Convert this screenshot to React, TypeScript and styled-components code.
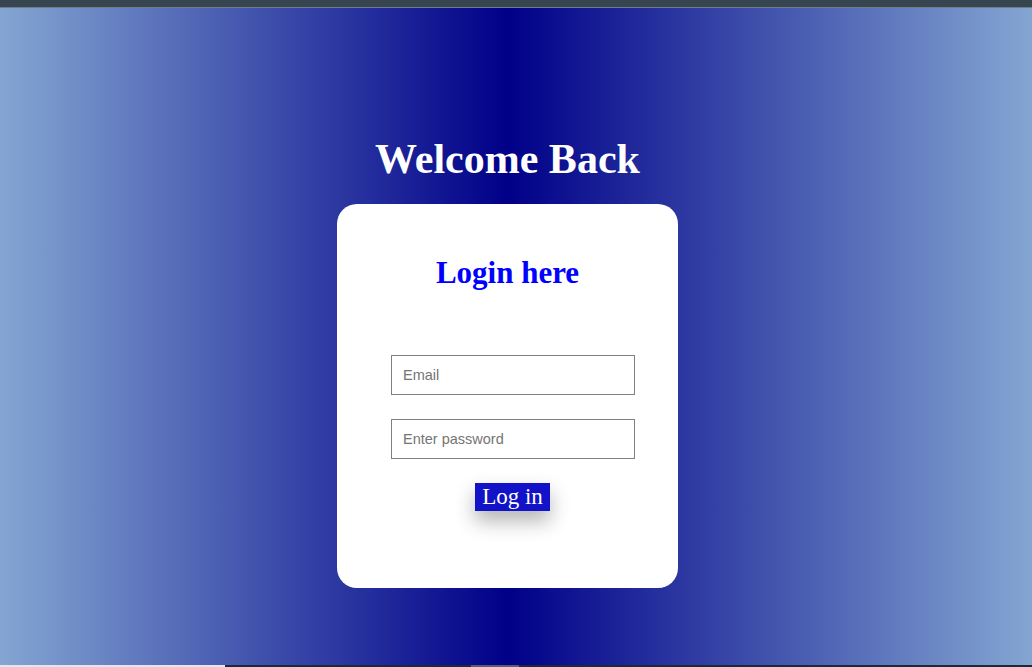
import React from "react";
import styled, { createGlobalStyle } from "styled-components";

const Global = createGlobalStyle`
  html, body { margin: 0; padding: 0; }
  body { overflow: hidden; font-family: "Liberation Serif", serif; }
`;

const Page = styled.div`
  width: 1032px;
  height: 667px;
  display: flex;
  flex-direction: column;
`;

const TopBar = styled.div`
  height: 7px;
  background: #36454f;
  border-bottom: 1px solid #6f7d86;
  flex: none;
`;

const Main = styled.main`
  flex: 1;
  background: linear-gradient(to right, #84a6d2 0%, #000088 49.2%, #84a6d2 100%);
  display: flex;
  flex-direction: column;
  align-items: center;
  padding-top: 127px;
  padding-right: 17px;
  box-sizing: border-box;
`;

const Title = styled.h1`
  margin: 0 0 21px;
  font-family: "Liberation Serif", serif;
  font-weight: bold;
  font-size: 42px;
  line-height: 48px;
  color: #ffffff;
`;

const Card = styled.form`
  width: 341px;
  height: 384px;
  background: #ffffff;
  border-radius: 20px;
  display: flex;
  flex-direction: column;
  align-items: center;
  padding-top: 51px;
  box-sizing: border-box;
`;

const CardTitle = styled.h2`
  margin: 0 0 64px;
  font-family: "Liberation Serif", serif;
  font-weight: bold;
  font-size: 31px;
  line-height: 36px;
  color: #0000ff;
`;

const Input = styled.input`
  width: 244px;
  height: 40px;
  box-sizing: border-box;
  border: 1px solid #808080;
  padding: 0 11px;
  margin: 0 0 24px 11px;
  font-family: "Liberation Sans", Arial, sans-serif;
  font-size: 14.5px;
  outline: none;
  &::placeholder { color: #757575; }
`;

const Button = styled.button`
  height: 28px;
  padding: 0 7px;
  border: none;
  background: #1212c8;
  color: #ffffff;
  font-family: "Liberation Serif", serif;
  font-size: 23px;
  line-height: 28px;
  box-shadow: 0 10px 20px rgba(0, 0, 0, 0.3);
  cursor: pointer;
  margin-left: 10px;
`;

const BottomBar = styled.div`
  height: 2px;
  flex: none;
  display: flex;
  background: #1a2a3a;
`;

const BottomSeg = styled.div<{ $w: number; $c: string; $ml?: number }>`
  width: ${(p) => p.$w}px;
  margin-left: ${(p) => p.$ml ?? 0}px;
  background: ${(p) => p.$c};
`;

export default function App() {
  return (
    <>
      <Global />
      <Page>
        <TopBar />
        <Main>
          <Title>Welcome Back</Title>
          <Card onSubmit={(e) => e.preventDefault()}>
            <CardTitle>Login here</CardTitle>
            <Input type="email" placeholder="Email" />
            <Input type="password" placeholder="Enter password" />
            <Button type="submit">Log in</Button>
          </Card>
        </Main>
        <BottomBar>
          <BottomSeg $w={225} $c="#e4e6ee" />
          <BottomSeg $w={48} $c="#56606c" $ml={246} />
        </BottomBar>
      </Page>
    </>
  );
}
